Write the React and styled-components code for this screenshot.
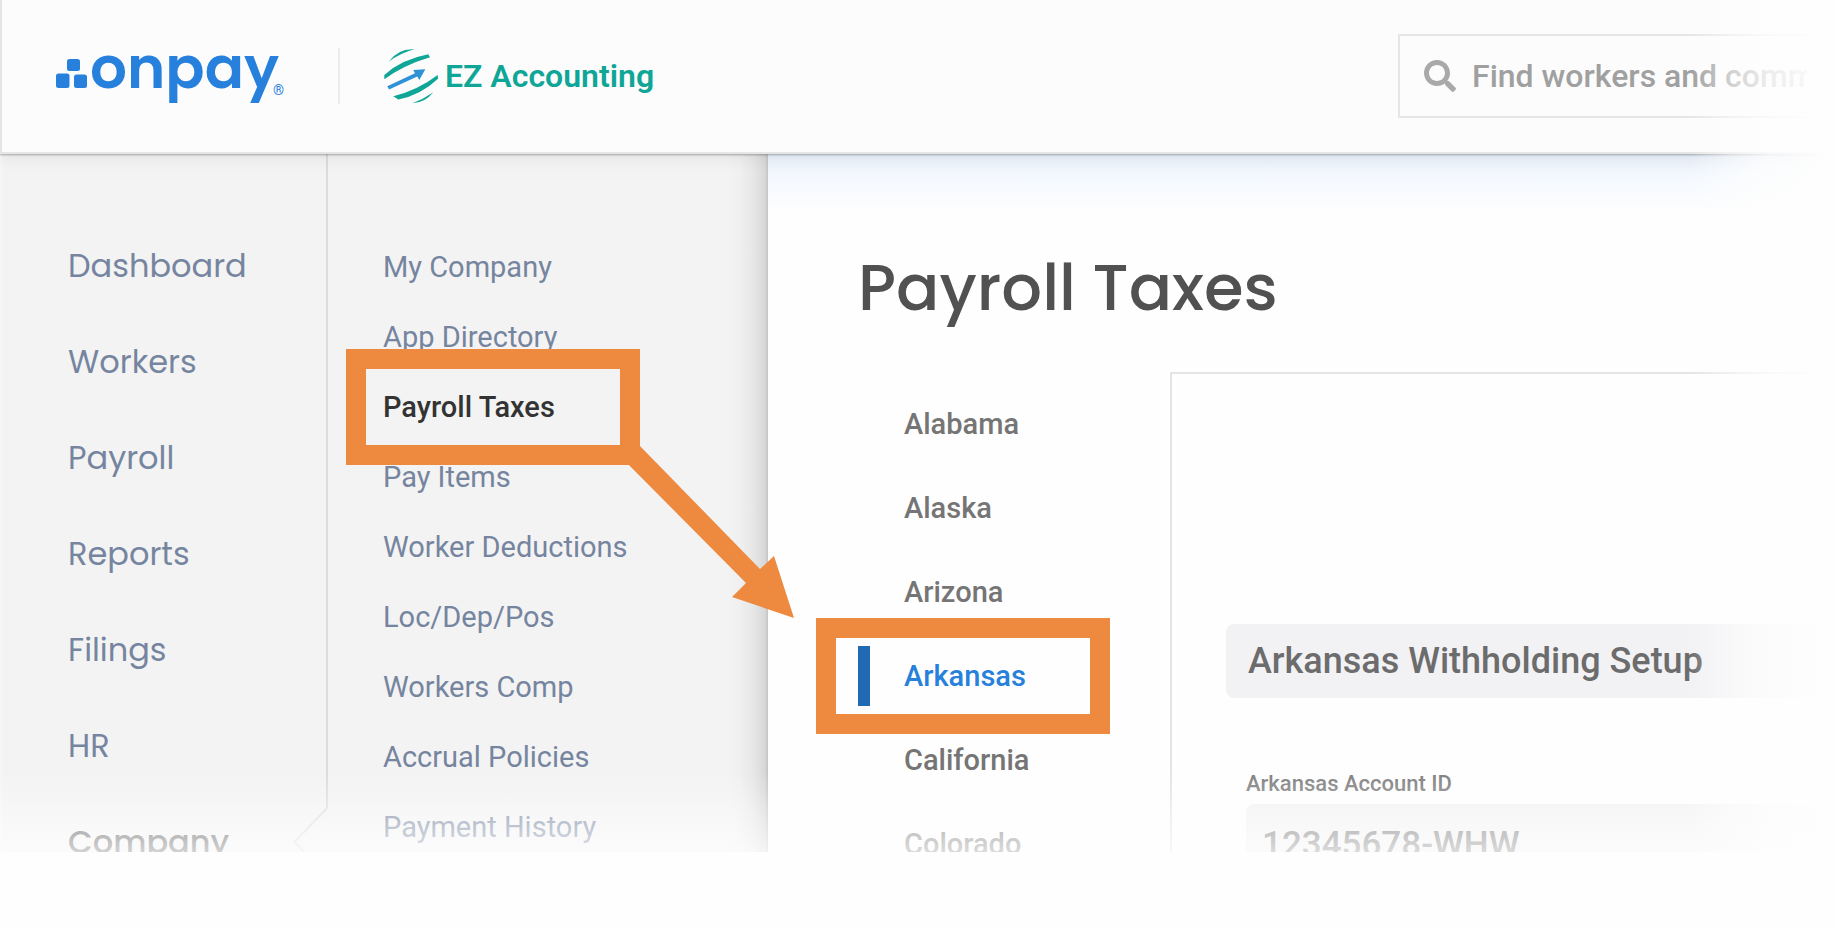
import { FaSearch } from 'react-icons/fa'
import styled, { createGlobalStyle, css } from 'styled-components'

const blue = '#2680dc'
const orange = '#ed8a3f'
const display = '"Poppins", "Inter", sans-serif'

const GlobalStyle = createGlobalStyle`
  * {
    box-sizing: border-box;
  }

  body {
    margin: 0;
    background: #fefefe;
    font-family: "Roboto", sans-serif;
  }

  ul {
    list-style: none;
    margin: 0;
    padding: 0;
  }

  a {
    color: inherit;
    text-decoration: none;
  }
`

const Shell = styled.div`
  position: relative;
  display: flex;
  flex-direction: column;
  height: calc(100vh - 76px);
  overflow: hidden;
`

const Header = styled.header`
  position: relative;
  z-index: 3;
  flex: none;
  display: flex;
  align-items: center;
  height: 154px;
  padding-left: 54px;
  background: #fcfcfc;
  border-left: 2px solid #e4e4e4;
  border-bottom: 2px solid #e6e6e6;
  box-shadow: 0 1px 2px rgba(0, 0, 0, 0.3), 0 4px 16px rgba(0, 0, 0, 0.07);
`

const Divider = styled.span`
  width: 2px;
  height: 56px;
  margin: 0 44px 0 52px;
  background: #ececec;
`

const Client = styled.a`
  display: flex;
  align-items: center;
  gap: 6px;
  color: #0fa697;
  font-size: 32px;
  font-weight: 600;
`

const SearchBox = styled.label`
  display: flex;
  align-items: center;
  gap: 14px;
  width: 436px;
  height: 84px;
  margin-left: auto;
  padding-left: 24px;
  border: 2px solid #e6e6e6;
  border-right: none;
  color: #a9a9a9;
`

const SearchInput = styled.input`
  flex: 1;
  min-width: 0;
  border: none;
  outline: none;
  background: transparent;
  font: 500 32px "Roboto", sans-serif;

  &::placeholder {
    color: #a0a0a0;
    opacity: 1;
  }
`

const Body = styled.div`
  flex: 1;
  display: flex;
  min-height: 0;
`

const MainNav = styled.nav`
  flex: none;
  width: 328px;
  padding-top: 64px;
  background: #f3f3f3;
  border-left: 2px solid #f6f6f6;
  border-right: 2px solid #dcdcdc;
  font-family: ${display};
  font-size: 32px;
`

const NavItem = styled.li`
  position: relative;
  display: flex;
  align-items: center;
  height: 96px;
  padding-left: 66px;
  color: ${({ $active }) => ($active ? '#505050' : '#76859f')};
  font-weight: ${({ $active }) => ($active ? 500 : 400)};
`

const Notch = styled.svg`
  position: absolute;
  top: 14px;
  right: -2px;
`

const SubNav = styled.nav`
  position: relative;
  z-index: 2;
  flex: none;
  width: 440px;
  padding: 78px 0 0 55px;
  background: linear-gradient(to left, #d6d6d6, #e6e6e6 12px, #f0f0f0 26px, #f3f3f3 40px);
  border-right: 2px solid #c9c9c9;
  font-size: 29px;
`

const SubItem = styled.li`
  position: relative;
  display: flex;
  align-items: center;
  height: 70px;
  color: ${({ $active }) => ($active ? '#333' : '#76859f')};
  font-weight: ${({ $active }) => ($active ? 500 : 400)};
`

const Callout = styled.span`
  position: absolute;
  z-index: 4;
  top: 50%;
  left: ${({ $left }) => $left}px;
  width: 294px;
  height: 116px;
  margin-top: -58px;
  border: 20px solid ${orange};
  pointer-events: none;
`

const Arrow = styled.svg`
  position: absolute;
  top: 70px;
  left: 250px;
`

const Main = styled.main`
  flex: 1;
  display: flex;
  flex-direction: column;
  min-width: 0;
  padding: 94px 0 0 90px;
  background: linear-gradient(#e9f1fc, #f5f9fe 25px, #fefefe 60px);
`

const Title = styled.h1`
  margin: 0 0 44px;
  color: #515151;
  font-family: ${display};
  font-size: 64px;
  font-weight: 500;
  line-height: 80px;
`

const Columns = styled.div`
  flex: 1;
  display: flex;
`

const States = styled.ul`
  flex: none;
  width: 312px;
  padding-top: 10px;
  font-size: 29px;
  font-weight: 500;
`

const StateItem = styled.li`
  position: relative;
  display: flex;
  align-items: center;
  height: 84px;
  color: #757575;

  &::before {
    content: "";
    width: 12px;
    height: 60px;
    margin-right: 34px;
  }

  ${({ $active }) => $active && css`
    color: ${blue};

    &::before {
      background: #2169b3;
    }
  `}
`

const Card = styled.section`
  flex: 1;
  padding: 250px 0 0 54px;
  border: solid #e4e4e4;
  border-width: 2px 0 0 2px;
`

const CardTitle = styled.h2`
  margin: 0 0 72px;
  padding-left: 22px;
  background: #f2f2f5;
  border-radius: 8px;
  color: #6c6c6c;
  font-size: 36px;
  font-weight: 500;
  line-height: 74px;
`

const Field = styled.div`
  padding-left: 20px;
`

const FieldLabel = styled.label`
  display: block;
  margin-bottom: 6px;
  color: #808080;
  font-size: 22px;
  font-weight: 500;
  line-height: 28px;
`

const FieldInput = styled.input`
  display: block;
  width: 100%;
  height: 80px;
  padding: 0 16px;
  border: none;
  border-radius: 8px;
  background: #f2f2f2;
  color: #737373;
  font: 500 35px "Roboto", sans-serif;
`

const FadeRight = styled.div`
  position: absolute;
  z-index: 5;
  top: 0;
  right: 0;
  bottom: 0;
  width: 144px;
  background: linear-gradient(to right, rgba(254, 254, 254, 0), rgba(254, 254, 254, 0.5) 40px, rgba(254, 254, 254, 0.8) 76px, #fefefe 136px);
  pointer-events: none;
`

const FadeBottom = styled.div`
  position: absolute;
  z-index: 5;
  right: 0;
  bottom: 0;
  left: 0;
  height: 80px;
  background: linear-gradient(rgba(254, 254, 254, 0), rgba(254, 254, 254, 0.5) 50px, rgba(254, 254, 254, 0.74));
  pointer-events: none;
`

const Logo = () => (
  <svg width="230" height="64" viewBox="0 0 230 64" fill={blue} role="img" aria-label="onpay">
    <rect x="11" y="15" width="13" height="12" rx="2.5" />
    <rect x="0" y="29.5" width="13.5" height="14.5" rx="2.5" />
    <rect x="18" y="30.5" width="13" height="13.5" rx="2.5" />
    <text x="34" y="44" fontFamily={display} fontSize="58" fontWeight="600">onpay</text>
    <text x="217" y="51" fontFamily="Roboto, sans-serif" fontSize="14">®</text>
  </svg>
)

const ClientMark = () => (
  <svg width="55" height="56" viewBox="0 0 55 56" fill="#0fa697" aria-hidden="true">
    <path d="M4.7 13.7Q14 .2 30.3 1.2 16 5 4.7 13.7Z" />
    <path d="M.3 27Q17 11.5 44.3 6.300L46 9.300Q20 17 .3 31.300Z" />
    <path fill="#2f92d6" d="M3.300 38.200 31 25.300 29.300 22 41.300 21.300 35.300 32 33.300 28.600 5 41.600Z" />
    <path d="M53.700 27 54 30.800Q37 47 14.300 51.600L9.300 48.300Q34 42 53.700 27Z" />
    <path d="M49.300 44.300Q41 55 28.300 55.300 39 51.500 49.300 44.300Z" />
  </svg>
)

const navItems = ['Dashboard', 'Workers', 'Payroll', 'Reports', 'Filings', 'HR', 'Company']

const subItems = [
  'My Company',
  'App Directory',
  'Payroll Taxes',
  'Pay Items',
  'Worker Deductions',
  'Loc/Dep/Pos',
  'Workers Comp',
  'Accrual Policies',
  'Payment History',
]

const states = ['Alabama', 'Alaska', 'Arizona', 'Arkansas', 'California', 'Colorado']

const App = () => {
  return (
    <>
      <GlobalStyle />
      <Shell>
        <Header>
          <Logo />
          <Divider />
          <Client href="#">
            <ClientMark />
            EZ Accounting
          </Client>
          <SearchBox>
            <FaSearch size={32} />
            <SearchInput type="search" aria-label="Search" placeholder="Find workers and commands" />
          </SearchBox>
        </Header>
        <Body>
          <MainNav>
            <ul>
              {navItems.map((name) => (
                <NavItem key={name} $active={name === 'Company'}>
                  <a href="#">{name}</a>
                  {name === 'Company' && (
                    <Notch width="35" height="68" viewBox="0 0 35 68">
                      <path d="M35 0V68H34L1 34 34 0Z" fill="#f3f3f3" />
                      <path d="M34 0 1.500 34 34 68" fill="none" stroke="#dcdcdc" strokeWidth="2" />
                    </Notch>
                  )}
                </NavItem>
              ))}
            </ul>
          </MainNav>
          <SubNav>
            <ul>
              {subItems.map((name) => (
                <SubItem key={name} $active={name === 'Payroll Taxes'}>
                  <a href="#">{name}</a>
                  {name === 'Payroll Taxes' && (
                    <Callout $left={-37}>
                      <Arrow width="182" height="182" viewBox="0 0 182 182" fill={orange}>
                        <path d="M3 6 23 6 144 130 158 117 178 179 116 158 130 144 3 16Z" />
                      </Arrow>
                    </Callout>
                  )}
                </SubItem>
              ))}
            </ul>
          </SubNav>
          <Main>
            <Title>Payroll Taxes</Title>
            <Columns>
              <States>
                {states.map((name) => (
                  <StateItem key={name} $active={name === 'Arkansas'}>
                    <a href="#">{name}</a>
                    {name === 'Arkansas' && <Callout $left={-42} />}
                  </StateItem>
                ))}
              </States>
              <Card>
                <CardTitle>Arkansas Withholding Setup</CardTitle>
                <Field>
                  <FieldLabel htmlFor="account-id">Arkansas Account ID</FieldLabel>
                  <FieldInput id="account-id" defaultValue="12345678-WHW" />
                </Field>
              </Card>
            </Columns>
          </Main>
        </Body>
        <FadeRight />
        <FadeBottom />
      </Shell>
    </>
  )
}

export default App
